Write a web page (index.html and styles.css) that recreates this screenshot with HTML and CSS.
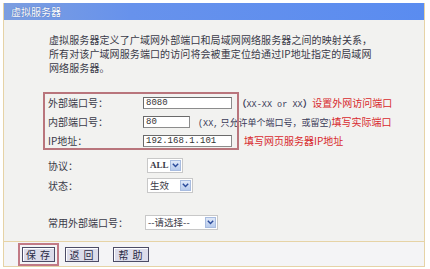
FILE: index.html
```html
<!DOCTYPE html>
<html lang="zh">
<head>
<meta charset="utf-8">
<link rel="stylesheet" href="styles.css">
</head>
<body>
<div class="frame">
  <div class="titlebar">虚拟服务器</div>
  <p class="desc">虚拟服务器定义了广域网外部端口和局域网网络服务器之间的映射关系，<br>所有对该广域网服务端口的访问将会被重定位给通过IP地址指定的局域网<br>网络服务器。</p>
  <div class="form">
    <div class="ports">
      <div class="row">
        <span class="label">外部端口号：</span>
        <span class="input wide">8080</span>
        <span class="hint gap5"><span class="paren">（</span><span class="mono">XX-XX or XX</span><span class="paren">）</span><span class="red">设置外网访问端口</span></span>
      </div>
      <div class="row">
        <span class="label">内部端口号：</span>
        <span class="input short">80</span>
        <span class="hint gap8"><span class="mono">(XX,</span> 只允许单个端口号，或留空)<span class="red">填写实际端口</span></span>
      </div>
      <div class="row">
        <span class="label">IP地址：</span>
        <span class="input wide">192.168.1.101</span>
        <span class="hint gap12"><span class="red">填写网页服务器IP地址</span></span>
      </div>
      <div class="redbox"></div>
    </div>
    <div class="row tall first-sel">
      <span class="label">协议：</span>
      <span class="select s-all"><span class="val bold">ALL</span><span class="arrow"><svg width="7" height="5" viewBox="0 0 7 5"><path d="M0.8 0.8 L3.5 3.6 L6.2 0.8" fill="none" stroke="#2a4a9a" stroke-width="1.4"/></svg></span></span>
    </div>
    <div class="row tall">
      <span class="label">状态：</span>
      <span class="select s-state"><span class="val">生效</span><span class="arrow"><svg width="7" height="5" viewBox="0 0 7 5"><path d="M0.8 0.8 L3.5 3.6 L6.2 0.8" fill="none" stroke="#2a4a9a" stroke-width="1.4"/></svg></span></span>
    </div>
    <div class="row tall common">
      <span class="label">常用外部端口号：</span>
      <span class="select s-common"><span class="val">--请选择--</span><span class="arrow"><svg width="7" height="5" viewBox="0 0 7 5"><path d="M0.8 0.8 L3.5 3.6 L6.2 0.8" fill="none" stroke="#2a4a9a" stroke-width="1.4"/></svg></span></span>
    </div>
  </div>
  <div class="footer">
    <span class="btn b-save">保 存</span>
    <span class="btn b-back">返 回</span>
    <span class="btn b-help">帮 助</span>
  </div>
</div>
</body>
</html>
```
FILE: styles.css
```css
html, body {
  margin: 0;
  padding: 0;
  background: #ffffff;
}
body {
  font-family: "Noto Sans CJK SC", "Noto Sans", sans-serif;
  font-size: 10px;
  color: #3a3a48;
}
.frame {
  margin: 3px 0 0 3px;
  width: 420px;
  border: 1px solid #e6d3a6;
  border-top: none;
  background: #f2f2f0;
}
.titlebar {
  height: 17px;
  line-height: 17px;
  background: linear-gradient(90deg, #7c9ee0 0%, #6792ec 30%, #5a8cf0 100%);
  color: #ffffff;
  font-size: 10px;
  padding-left: 7px;
  text-shadow: 0 0 1px #3a5aa0;
}
.desc {
  margin: 13px 0 0 0;
  padding-left: 45px;
  line-height: 14px;
  font-size: 10px;
  letter-spacing: 0.1px;
  white-space: nowrap;
}
.form {
  margin-top: 18px;
}
.ports {
  position: relative;
}
.redbox {
  position: absolute;
  left: 39px;
  top: -1px;
  width: 192px;
  height: 54px;
  border: 2px solid #b9757c;
  pointer-events: none;
}
.row {
  display: flex;
  align-items: center;
  height: 19px;
  padding-left: 44px;
  white-space: nowrap;
}
.row.tall {
  height: 20px;
}
.first-sel {
  margin-top: 5px;
}
.common {
  margin-top: 17px;
}
.label {
  width: 95px;
  flex: none;
}
.input {
  height: 10px;
  line-height: 10px;
  border: 1px solid #8c8c8c;
  border-top-color: #6a6a6a;
  border-left-color: #6a6a6a;
  background: #ffffff;
  font-family: "Liberation Mono", monospace;
  font-size: 9px;
  color: #333;
  padding-left: 2px;
  flex: none;
}
.input.wide { width: 85px; }
.input.short { width: 43px; }
.hint {
  font-size: 9px;
  color: #3a3a58;
}
.gap5 { margin-left: 5px; }
.gap8 { margin-left: 8px; }
.gap12 { margin-left: 12px; }
.mono {
  font-family: "Liberation Mono", monospace;
  font-size: 8.5px;
}
.paren {
  font-family: "Noto Sans CJK SC", sans-serif;
  font-size: 9.5px;
  font-weight: bold;
}
.red {
  color: #d82a2e;
  font-size: 10px;
}
.select {
  display: flex;
  align-items: center;
  height: 13px;
  background: #ffffff;
  border: 1px solid #c8c8c8;
  margin-left: 4px;
  flex: none;
}
.select .val {
  flex: 1;
  padding-left: 2px;
  font-size: 9.5px;
  line-height: 13px;
}
.select .val.bold {
  font-family: "Liberation Serif", serif;
  font-weight: bold;
  font-size: 9px;
}
.s-all { width: 34px; }
.s-state { width: 44px; }
.s-common { width: 71px; margin-left: 2px; }
.arrow {
  width: 11px;
  height: 11px;
  margin-right: 1px;
  background: linear-gradient(#dfe8f8, #b8cbec);
  border: 1px solid #a8bce0;
  box-sizing: border-box;
  display: flex;
  align-items: center;
  justify-content: center;
}
.footer {
  margin-top: 9px;
  border-top: 1px solid #e6d3a6;
  background: #f4f4f6;
  display: flex;
  align-items: center;
  padding: 5px 0 4px 18px;
}
.btn {
  height: 13px;
  line-height: 13px;
  background: #dcdcea;
  border: 1px solid #4c4c66;
  box-shadow: inset 1px 1px 0 #ffffff;
  color: #2a2a44;
  font-size: 10px;
  letter-spacing: 1px;
  text-align: center;
  white-space: nowrap;
  box-sizing: content-box;
  flex: none;
}
.b-save {
  width: 31px;
  outline: 2px solid #c27a86;
  outline-offset: 2px;
}
.b-back {
  width: 32px;
  margin-left: 10px;
}
.b-help {
  width: 34px;
  margin-left: 14px;
}
```
